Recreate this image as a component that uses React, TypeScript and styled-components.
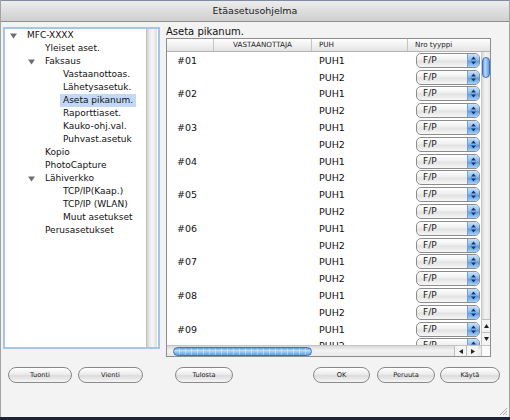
import React from 'react';
import styled, { createGlobalStyle } from 'styled-components';

const GlobalStyle = createGlobalStyle`
  html, body {
    margin: 0;
    padding: 0;
    background: #1b2436;
  }
  * {
    box-sizing: border-box;
  }
`;

const Screen = styled.div`
  width: 510px;
  height: 420px;
  display: flex;
  flex-direction: column;
  overflow: hidden;
  font-family: "DejaVu Sans", Verdana, sans-serif;
  color: #111;
`;

const Window = styled.div`
  flex: 1;
  display: flex;
  flex-direction: column;
  background: #f3f3f3;
  border-left: 1px solid #a3a3a3;
  border-right: 1px solid #a3a3a3;
`;

const DesktopStrip = styled.div`
  height: 3px;
  background: #1b2436;
`;

const TitleBar = styled.div`
  height: 22px;
  border-top: 1px solid #7f8ba0;
  border-bottom: 1px solid #8f8f8f;
  background: linear-gradient(#ededed, #dedede 50%, #cfcfcf);
  font-size: 9.5px;
  line-height: 20px;
  text-align: center;
  color: #1a1a1a;
`;

const Body = styled.div`
  flex: 1;
  display: flex;
  flex-direction: column;
  padding: 4px 0 0 2px;
`;

const Main = styled.div`
  height: 331px;
  display: flex;
  gap: 6px;
`;

/* ---------- tree ---------- */

const TreePanel = styled.div`
  width: 157px;
  height: 322px;
  margin-top: 1px;
  display: flex;
  background: #fff;
  border: 2px solid #a7c4ec;
`;

const TreeList = styled.div`
  flex: 1;
`;

const TreeTrack = styled.div`
  width: 11px;
  margin-right: 1px;
  background: linear-gradient(to right, #cfcfcf, #ececec 30%, #f6f6f6 60%, #dcdcdc);
  border-left: 1px solid #c2c2c2;
`;

const TreeRow = styled.div<{ $level: number }>`
  height: 13px;
  display: flex;
  align-items: center;
  padding-left: ${(p) => p.$level * 18 + 5}px;
  font-size: 9px;
`;

const Toggle = styled.span`
  width: 17px;
  height: 13px;
  display: flex;
  align-items: center;
`;

const TreeLabel = styled.span<{ $selected?: boolean }>`
  padding: 0 3px;
  margin-left: -3px;
  line-height: 13px;
  white-space: nowrap;
  background: ${(p) => (p.$selected ? '#c3d8f6' : 'transparent')};
`;

/* ---------- right side ---------- */

const RightPanel = styled.div`
  width: 325px;
  display: flex;
  flex-direction: column;
`;

const PanelLabel = styled.div`
  height: 12px;
  font-size: 10px;
  line-height: 12px;
`;

const TableFrame = styled.div`
  height: 319px;
  display: flex;
  flex-direction: column;
  border: 1px solid #8d8d8d;
  background: #fff;
`;

const HeaderRow = styled.div`
  height: 13px;
  display: flex;
  border-bottom: 1px solid #b4b4b4;
  background: linear-gradient(#ffffff, #f1f1f1 50%, #e4e4e4);
`;

const HeaderCell = styled.div<{ $width?: number; $center?: boolean }>`
  ${(p) => (p.$width ? `width: ${p.$width}px;` : 'flex: 1;')}
  border-right: 1px solid #c4c4c4;
  font-size: 7.2px;
  line-height: 12px;
  padding-left: ${(p) => (p.$center ? 0 : 7)}px;
  text-align: ${(p) => (p.$center ? 'center' : 'left')};
  color: #222;
  white-space: nowrap;
  &:last-child {
    border-right: none;
  }
`;

const Middle = styled.div`
  height: 293px;
  display: flex;
`;

const RowsArea = styled.div`
  width: 314px;
  overflow: hidden;
`;

const DataRow = styled.div`
  height: 16.8px;
  display: flex;
  align-items: center;
  font-size: 9.5px;
`;

const Cell = styled.div<{ $width: number; $pad: number }>`
  width: ${(p) => p.$width}px;
  padding-left: ${(p) => p.$pad}px;
  white-space: nowrap;
`;

const Popup = styled.div`
  width: 64px;
  height: 15px;
  display: flex;
  border: 1px solid #8c8c8c;
  border-radius: 5px;
  overflow: hidden;
  background: linear-gradient(#ffffff, #efefef 45%, #e2e2e2 55%, #f7f7f7);
`;

const PopupText = styled.span`
  flex: 1;
  padding-left: 6px;
  font-size: 9px;
  line-height: 13px;
  color: #1a1a1a;
`;

const PopupArrows = styled.span`
  width: 12px;
  display: flex;
  align-items: center;
  justify-content: center;
  border-left: 1px solid #7aa0d2;
  background: linear-gradient(#c8e2fb, #8cbdf2 45%, #5d9de8 55%, #a6d0f7);
`;

const VScroll = styled.div`
  flex: 1;
  display: flex;
  flex-direction: column;
  align-items: center;
  border-left: 1px solid #c9c9c9;
  background: linear-gradient(to right, #d9d9d9, #f3f3f3 45%, #e8e8e8);
`;

const VThumb = styled.div`
  width: 8px;
  height: 21px;
  margin-top: 5px;
  border-radius: 4px;
  border: 1px solid #4272b4;
  background: linear-gradient(to right, #5a94e0, #bcdcfa 35%, #8ec0f2 65%, #5f9ae4);
`;

const Spacer = styled.div`
  flex: 1;
`;

const ArrowBox = styled.div<{ $horizontal?: boolean }>`
  width: ${(p) => (p.$horizontal ? '12px' : '100%')};
  height: ${(p) => (p.$horizontal ? '100%' : '13px')};
  display: flex;
  align-items: center;
  justify-content: center;
  ${(p) => (p.$horizontal ? 'border-left: 1px solid #bdbdbd;' : 'border-top: 1px solid #bdbdbd;')}
  background: #f4f4f4;
`;

const BottomRow = styled.div`
  height: 11px;
  display: flex;
  border-top: 1px solid #c4c4c4;
`;

const HScroll = styled.div`
  width: 314px;
  display: flex;
  padding-right: 3px;
  background: linear-gradient(#d9d9d9, #f3f3f3 45%, #e8e8e8);
`;

const HTrack = styled.div`
  flex: 1;
  display: flex;
  align-items: center;
`;

const HThumb = styled.div`
  width: 139px;
  height: 9px;
  margin-left: 6px;
  border-radius: 5px;
  border: 1px solid #4272b4;
  background:
    repeating-linear-gradient(to right, transparent 0 5px, rgba(255, 255, 255, 0.35) 5px 6px),
    linear-gradient(#5a94e0, #bcdcfa 35%, #8ec0f2 65%, #5f9ae4);
`;

const Corner = styled.div`
  flex: 1;
  border-left: 1px solid #c4c4c4;
  background: #fbfbfb;
`;

/* ---------- footer ---------- */

const Footer = styled.div`
  flex: 1;
  display: flex;
  flex-direction: column;
`;

const ButtonRow = styled.div`
  display: flex;
  align-items: center;
  margin-top: 10px;
  padding: 0 9px 0 5px;
`;

const PillButton = styled.button<{ $width: number; $gap?: number }>`
  width: ${(p) => p.$width}px;
  height: 16px;
  margin-left: ${(p) => p.$gap ?? 0}px;
  padding: 0;
  border: 1px solid #8a8a8a;
  border-radius: 8px;
  background: linear-gradient(#ffffff, #ececec 45%, #dcdcdc 55%, #f5f5f5);
  font-family: "DejaVu Sans", Verdana, sans-serif;
  font-size: 6.6px;
  color: #222;
`;

const GripRow = styled.div`
  margin-top: auto;
  display: flex;
  justify-content: flex-end;
  padding: 0 1px 1px 0;
`;

const treeItems: { label: string; level: number; open?: boolean; selected?: boolean }[] = [
  { label: 'MFC-XXXX', level: 0, open: true },
  { label: 'Yleiset aset.', level: 1 },
  { label: 'Faksaus', level: 1, open: true },
  { label: 'Vastaanottoas.', level: 2 },
  { label: 'Lähetysasetuk.', level: 2 },
  { label: 'Aseta pikanum.', level: 2, selected: true },
  { label: 'Raporttiaset.', level: 2 },
  { label: 'Kauko-ohj.val.', level: 2 },
  { label: 'Puhvast.asetuk', level: 2 },
  { label: 'Kopio', level: 1 },
  { label: 'PhotoCapture', level: 1 },
  { label: 'Lähiverkko', level: 1, open: true },
  { label: 'TCP/IP(Kaap.)', level: 2 },
  { label: 'TCP/IP (WLAN)', level: 2 },
  { label: 'Muut asetukset', level: 2 },
  { label: 'Perusasetukset', level: 1 },
];

const rows: { id: string; phone: string }[] = [];
for (let i = 1; i <= 9; i++) {
  rows.push({ id: `#0${i}`, phone: 'PUH1' });
  rows.push({ id: '', phone: 'PUH2' });
}

const DownTriangle = () => (
  <svg width="7" height="6" viewBox="0 0 7 6">
    <polygon points="0,0.5 7,0.5 3.5,5.5" fill="#6e6e6e" />
  </svg>
);

const UpDown = () => (
  <svg width="5" height="9" viewBox="0 0 5 9">
    <polygon points="0,3.6 2.5,0.6 5,3.6" fill="#1d3a66" />
    <polygon points="0,5.4 2.5,8.4 5,5.4" fill="#1d3a66" />
  </svg>
);

const Arrow = ({ dir }: { dir: 'up' | 'down' | 'left' | 'right' }) => {
  const pts = {
    up: '0,4 2.5,0 5,4',
    down: '0,0 2.5,4 5,0',
    left: '4,0 0,2.5 4,5',
    right: '0,0 4,2.5 0,5',
  }[dir];
  const horizontal = dir === 'left' || dir === 'right';
  return (
    <svg width={horizontal ? 4 : 5} height={horizontal ? 5 : 4} viewBox={horizontal ? '0 0 4 5' : '0 0 5 4'}>
      <polygon points={pts} fill="#222" />
    </svg>
  );
};

const Grip = () => (
  <svg width="10" height="10" viewBox="0 0 10 10">
    <line x1="9" y1="2" x2="2" y2="9" stroke="#9a9a9a" strokeWidth="0.8" />
    <line x1="9" y1="5" x2="5" y2="9" stroke="#9a9a9a" strokeWidth="0.8" />
    <line x1="9" y1="8" x2="8" y2="9" stroke="#9a9a9a" strokeWidth="0.8" />
  </svg>
);

export default function App() {
  return (
    <Screen>
      <GlobalStyle />
      <Window>
        <TitleBar>Etäasetusohjelma</TitleBar>
        <Body>
          <Main>
            <TreePanel>
              <TreeList>
                {treeItems.map((item) => (
                  <TreeRow key={item.label} $level={item.level}>
                    <Toggle>{item.open && <DownTriangle />}</Toggle>
                    <TreeLabel $selected={item.selected}>{item.label}</TreeLabel>
                  </TreeRow>
                ))}
              </TreeList>
              <TreeTrack />
            </TreePanel>

            <RightPanel>
              <PanelLabel>Aseta pikanum.</PanelLabel>
              <TableFrame>
                <HeaderRow>
                  <HeaderCell $width={47} />
                  <HeaderCell $width={98} $center>
                    VASTAANOTTAJA
                  </HeaderCell>
                  <HeaderCell $width={96}>PUH</HeaderCell>
                  <HeaderCell>Nro tyyppi</HeaderCell>
                </HeaderRow>
                <Middle>
                  <RowsArea>
                    {rows.map((r, i) => (
                      <DataRow key={i}>
                        <Cell $width={47} $pad={10}>
                          {r.id}
                        </Cell>
                        <Cell $width={98} $pad={0} />
                        <Cell $width={96} $pad={7}>
                          {r.phone}
                        </Cell>
                        <Cell $width={73} $pad={8}>
                          <Popup>
                            <PopupText>F/P</PopupText>
                            <PopupArrows>
                              <UpDown />
                            </PopupArrows>
                          </Popup>
                        </Cell>
                      </DataRow>
                    ))}
                  </RowsArea>
                  <VScroll>
                    <VThumb />
                    <Spacer />
                    <ArrowBox>
                      <Arrow dir="up" />
                    </ArrowBox>
                    <ArrowBox>
                      <Arrow dir="down" />
                    </ArrowBox>
                  </VScroll>
                </Middle>
                <BottomRow>
                  <HScroll>
                    <HTrack>
                      <HThumb />
                    </HTrack>
                    <ArrowBox $horizontal>
                      <Arrow dir="left" />
                    </ArrowBox>
                    <ArrowBox $horizontal>
                      <Arrow dir="right" />
                    </ArrowBox>
                  </HScroll>
                  <Corner />
                </BottomRow>
              </TableFrame>
            </RightPanel>
          </Main>

          <Footer>
            <ButtonRow>
              <PillButton $width={64}>Tuonti</PillButton>
              <PillButton $width={65} $gap={6}>
                Vienti
              </PillButton>
              <PillButton $width={58} $gap={32}>
                Tulosta
              </PillButton>
              <Spacer />
              <PillButton $width={57}>OK</PillButton>
              <PillButton $width={58} $gap={7}>
                Peruuta
              </PillButton>
              <PillButton $width={60} $gap={5}>
                Käytä
              </PillButton>
            </ButtonRow>
            <GripRow>
              <Grip />
            </GripRow>
          </Footer>
        </Body>
      </Window>
      <DesktopStrip />
    </Screen>
  );
}
